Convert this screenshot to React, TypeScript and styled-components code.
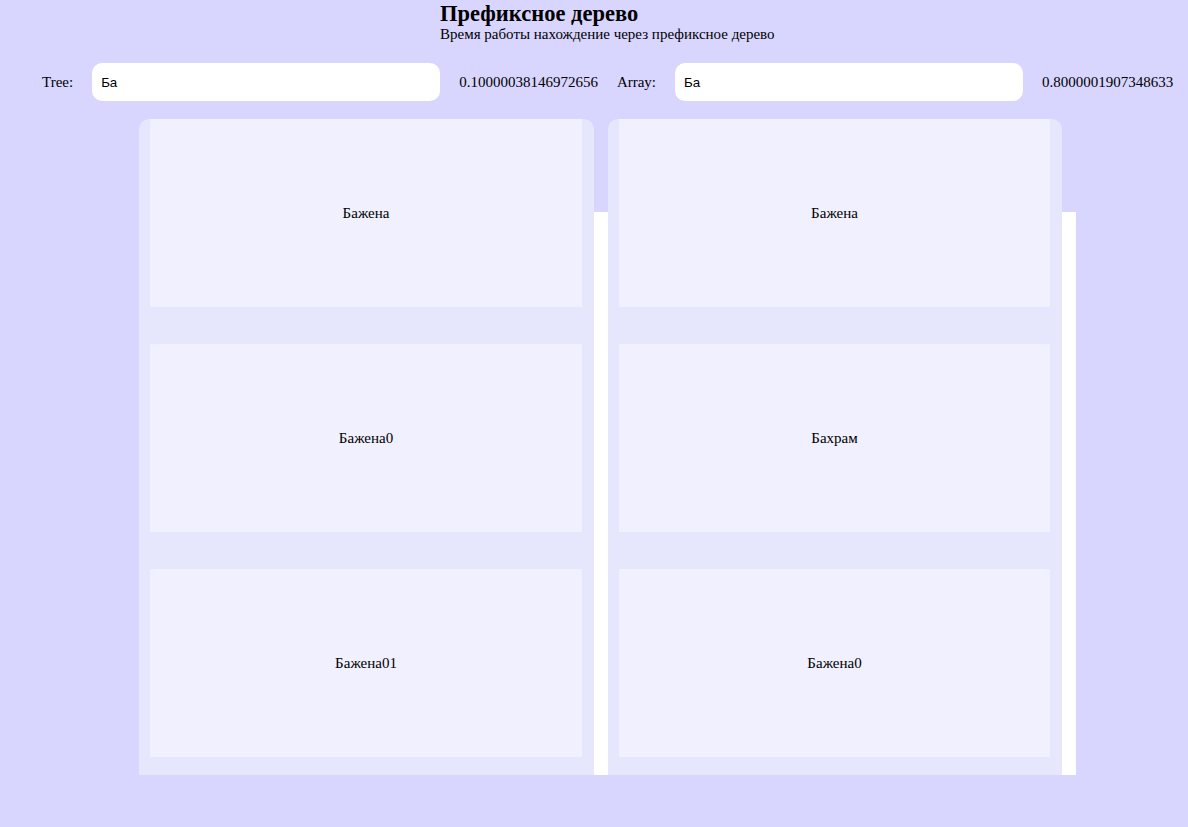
import React from "react";
import styled, { createGlobalStyle } from "styled-components";

const Global = createGlobalStyle`
  html, body { margin: 0; padding: 0; background: #d8d6fe; }
  body { font-family: "Liberation Serif", "Times New Roman", serif; color: #000; }
  * { box-sizing: border-box; }
`;

const Page = styled.div`
  min-height: 827px;
  display: flex;
  flex-direction: column;
`;

const Header = styled.header`
  padding-left: 440px;
  padding-top: 2px;
`;

const Title = styled.h1`
  margin: 0;
  font-size: 22.5px;
  line-height: 24px;
  font-weight: bold;
`;

const Subtitle = styled.p`
  margin: 0;
  font-size: 15px;
  line-height: 17px;
`;

const Controls = styled.div`
  display: flex;
  align-items: center;
  gap: 19px;
  padding-left: 42px;
  margin-top: 20px;
  height: 38px;
`;

const Label = styled.span`
  font-size: 15px;
`;

const SearchInput = styled.input`
  width: 348px;
  height: 38px;
  border: none;
  border-radius: 10px;
  background: #fff;
  padding: 0 9px;
  font-family: "Liberation Sans", Arial, sans-serif;
  font-size: 13.33px;
  color: #000;
  outline: none;
`;

const Value = styled.span`
  font-size: 15px;
`;

const Board = styled.div`
  margin-top: 18px;
  margin-left: 139px;
  width: 937px;
  display: flex;
  gap: 14px;
  padding-right: 14px;
  background: linear-gradient(to bottom, transparent 93px, #fff 93px);
`;

const Column = styled.div<{ $w: number }>`
  width: ${(p) => p.$w}px;
  height: 656px;
  background: #e6e6fd;
  border-radius: 10px 10px 0 0;
  padding: 0 12px 18px 11px;
  display: flex;
  flex-direction: column;
  gap: 37px;
`;

const Card = styled.div`
  height: 188px;
  background: #f0f0fe;
  display: flex;
  align-items: center;
  justify-content: center;
  font-size: 15px;
`;

const tree = ["Бажена", "Бажена0", "Бажена01"];
const arr = ["Бажена", "Бахрам", "Бажена0"];

export default function App() {
  return (
    <>
      <Global />
      <Page>
        <Header>
          <Title>Префиксное дерево</Title>
          <Subtitle>Время работы нахождение через префиксное дерево</Subtitle>
        </Header>
        <Controls>
          <Label>Tree:</Label>
          <SearchInput defaultValue="Ба" />
          <Value>0.10000038146972656</Value>
          <Label>Array:</Label>
          <SearchInput defaultValue="Ба" />
          <Value>0.8000001907348633</Value>
        </Controls>
        <Board>
          <Column $w={455}>
            {tree.map((t) => (
              <Card key={t}>{t}</Card>
            ))}
          </Column>
          <Column $w={454}>
            {arr.map((t) => (
              <Card key={t}>{t}</Card>
            ))}
          </Column>
        </Board>
      </Page>
    </>
  );
}
